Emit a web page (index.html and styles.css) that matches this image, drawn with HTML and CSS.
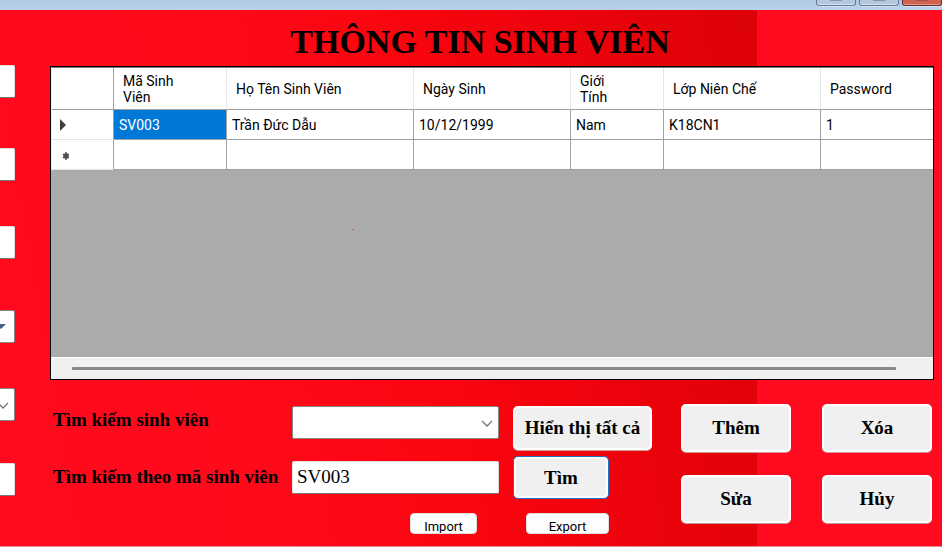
FILE: index.html
```html
<!DOCTYPE html>
<html lang="vi">
<head>
<meta charset="utf-8">
<title>Thông tin sinh viên</title>
<link rel="stylesheet" href="styles.css">
</head>
<body>
<div class="window">
  <header class="titlebar">
    <button class="caption" type="button" aria-label="Thu nhỏ"><span class="caption-mark"></span></button>
    <button class="caption" type="button" aria-label="Phóng to"><span class="caption-mark"></span></button>
    <button class="caption caption-close" type="button" aria-label="Đóng"><span class="caption-mark"></span></button>
  </header>
  <div class="form">
    <aside class="details">
      <input class="field" type="text" aria-label="Mã sinh viên">
      <input class="field" type="text" aria-label="Họ tên sinh viên">
      <input class="field" type="text" aria-label="Password">
      <div class="combo">
        <input class="field" type="text" aria-label="Ngày sinh">
        <svg class="drop-arrow" viewBox="0 0 10 5" aria-hidden="true"><path d="M0 0h10L5 5z" fill="#465f8c"/></svg>
      </div>
      <div class="combo">
        <select class="field" aria-label="Giới tính"><option></option></select>
        <svg class="chevron" viewBox="0 0 12 7" aria-hidden="true"><path d="M1 1l5 5 5-5" fill="none" stroke="#777" stroke-width="1.3"/></svg>
      </div>
      <input class="field" type="text" aria-label="Lớp niên chế">
    </aside>
    <main class="main">
      <h1 class="title">THÔNG TIN SINH VIÊN</h1>
      <section class="grid-view">
        <table class="students">
          <colgroup>
            <col class="c-mark"><col class="c-id"><col class="c-name"><col class="c-date"><col class="c-sex"><col class="c-date"><col>
          </colgroup>
          <thead>
            <tr>
              <th></th>
              <th>Mã Sinh<br>Viên</th>
              <th>Họ Tên Sinh Viên</th>
              <th>Ngày Sinh</th>
              <th>Giới<br>Tính</th>
              <th>Lớp Niên Chế</th>
              <th>Password</th>
            </tr>
          </thead>
          <tbody>
            <tr>
              <td class="mark"><svg class="row-mark" viewBox="0 0 12 12" aria-hidden="true"><path d="M3 0l6 6-6 6z" fill="#404040"/></svg></td>
              <td class="selected">SV003</td>
              <td>Trần Đức Dẫu</td>
              <td>10/12/1999</td>
              <td>Nam</td>
              <td>K18CN1</td>
              <td>1</td>
            </tr>
            <tr>
              <td class="mark"><svg class="row-mark" viewBox="0 0 12 12" aria-hidden="true"><path d="M9 3v8M6 5l6 4M12 5l-6 4" fill="none" stroke="#555" stroke-width="1.500"/><circle cx="9" cy="7" r="2.800" fill="#505050"/></svg></td>
              <td></td><td></td><td></td><td></td><td></td><td></td>
            </tr>
          </tbody>
        </table>
        <span class="speck"></span>
        <div class="scrollbar"><div class="thumb"></div></div>
      </section>
      <section class="tools">
        <div class="search">
          <label class="label" for="find-student">Tìm kiếm sinh viên</label>
          <div class="combo">
            <select class="field" id="find-student"><option></option></select>
            <svg class="chevron" viewBox="0 0 12 7" aria-hidden="true"><path d="M1 1l5 5 5-5" fill="none" stroke="#777" stroke-width="1.3"/></svg>
          </div>
          <button class="btn btn-all" type="button">Hiển thị tất cả</button>

          <label class="label centered" for="find-id">Tìm kiếm theo mã sinh viên</label>
          <input class="field centered" id="find-id" type="text" value="SV003">
          <button class="btn btn-find" type="button">Tìm</button>

          <button class="btn-small btn-import" type="button"><span class="small-text">Import</span></button>
          <button class="btn-small btn-export" type="button"><span class="small-text">Export</span></button>
        </div>
        <div class="actions">
          <button class="btn" type="button">Thêm</button>
          <button class="btn" type="button">Xóa</button>
          <button class="btn" type="button">Sửa</button>
          <button class="btn" type="button">Hủy</button>
        </div>
      </section>
    </main>
  </div>
</div>
</body>
</html>
```
FILE: styles.css
```css
* {
  box-sizing: border-box;
}

body {
  margin: 0;
  font-family: "Liberation Serif", serif;
  color: #000;
}

.window {
  display: flex;
  flex-direction: column;
  min-height: 100vh;
  border-bottom: 1px solid #e08a98;
}

/* Title bar */
.titlebar {
  display: flex;
  justify-content: flex-end;
  gap: 3px;
  height: 10px;
  background: linear-gradient(#b0c9e3, #b9d1ea);
}

.caption {
  display: flex;
  justify-content: center;
  width: 40px;
  height: 6px;
  padding: 0;
  border: 1px solid #66788f;
  border-top: 0;
  border-radius: 0 0 3px 3px;
  background: #b3c8de;
  box-shadow: inset 0 -1px #d5e3f1, 0 1px #d5e3f1;
}

.caption-mark {
  width: 12px;
  height: 1px;
  background: #8296b0;
}

.caption-close {
  border-color: #662b35;
  background: #cf6350;
  box-shadow: inset 0 -1px #e69a8c, 0 1px #d5e3f1;
}

.caption-close .caption-mark {
  background: #a05050;
}

/* Form surface */
.form {
  display: flex;
  flex: 1;
  background:
    linear-gradient(90deg, transparent 80.4%, #ff0a1e 80.4%),
    linear-gradient(80deg, #ff0a1e 0%, #ff0a1b 24%, #fb0510 45%, #e8020a 68%, #db0208 84%);
}

.details {
  display: grid;
  grid-template-rows: 83px 78px 84px 78px 75px 33px;
  align-content: start;
  justify-content: end;
  width: 15px;
  padding-top: 55px;
  overflow: hidden;
}

.details .field {
  width: 207px;
}

.main {
  display: flex;
  flex: 1;
  flex-direction: column;
  min-width: 0;
  padding: 12px 8px 0 35px;
}

.title {
  height: 44px;
  margin: 0;
  padding-right: 24px;
  font-size: 34px;
  line-height: 40px;
  text-align: center;
  white-space: nowrap;
}

/* Data grid */
.grid-view {
  position: relative;
  display: flex;
  flex: 1;
  flex-direction: column;
  border: 1px solid #000;
  background: #ababab;
}

.students {
  width: 100%;
  border-top: 1px solid #777;
  border-left: 1px solid #eee;
  border-spacing: 0;
  table-layout: fixed;
  background: #fff;
  font-family: Roboto, "Liberation Sans", sans-serif;
  font-size: 14px;
  line-height: 16px;
}

.c-mark { width: 62px; }
.c-id { width: 113px; }
.c-name { width: 187px; }
.c-date { width: 157px; }
.c-sex { width: 93px; }

.students th {
  height: 42px;
  padding: 0 0 0 9px;
  border-right: 1px solid #e5e5e5;
  border-bottom: 1px solid #a0a0a0;
  font-weight: 400;
  text-align: left;
  white-space: nowrap;
}

.students td {
  height: 30px;
  padding: 0 0 0 5px;
  border-right: 1px solid #a0a0a0;
  border-bottom: 1px solid #a0a0a0;
  white-space: nowrap;
}

.students th:last-child,
.students td:last-child {
  border-right: 0;
}

.students th:first-child {
  border-right-color: #a0a0a0;
}

.students .mark {
  border-bottom-color: #e5e5e5;
}

.students .selected {
  background: #0078d7;
  color: #fff;
}

.row-mark {
  display: block;
  width: 12px;
  height: 12px;
}

.speck {
  position: absolute;
  top: 162px;
  left: 301px;
  width: 2px;
  height: 1px;
  background: #d85858;
}

.scrollbar {
  height: 22px;
  margin-top: auto;
  padding: 9px 37px 0 21px;
  border-top: 1px solid #fff;
  background: #f0f0f0;
}

.thumb {
  height: 3px;
  border-radius: 1px;
  background: #888;
}

/* Search and action buttons */
.tools {
  display: flex;
  justify-content: space-between;
  gap: 29px;
  padding: 24px 2px 20px 3px;
}

.search {
  display: grid;
  flex: 1;
  grid-template-columns: 1fr 207px 139px;
  grid-template-rows: 44px 42px 22px;
  column-gap: 14px;
  row-gap: 6px;
  align-items: start;
  padding-top: 2px;
}

.label {
  margin-right: -14px;
  font-size: 19px;
  font-weight: 700;
  line-height: 28px;
  white-space: nowrap;
}

.centered {
  align-self: center;
}

.field {
  display: block;
  width: 100%;
  height: 33px;
  margin: 0;
  padding: 0 4px;
  border: 1px solid #ddd;
  border-bottom-color: #777;
  border-radius: 2px;
  outline: 0;
  background: #fff;
  color: #000;
  font-family: inherit;
  font-size: 19px;
  appearance: none;
}

.combo {
  position: relative;
}

.combo .field {
  border-color: #888;
}

.chevron,
.drop-arrow {
  position: absolute;
  top: 14px;
  right: 6px;
  width: 12px;
  height: 7px;
}

.drop-arrow {
  right: 9px;
  width: 10px;
  height: 5px;
}

.btn {
  padding: 0;
  border: 2px solid #fff;
  border-radius: 5px;
  background: #f0f0f0;
  box-shadow: 0 1px #c99;
  color: #000;
  font-family: inherit;
  font-size: 19px;
  font-weight: 700;
  white-space: nowrap;
}

.btn-all {
  height: 44px;
}

.btn-find {
  width: 96px;
  height: 43px;
  border: 1px solid #1a73c9;
  box-shadow: inset 0 0 0 2px #fff;
}

.btn-small {
  height: 21px;
  margin-top: 9px;
  padding: 0;
  border: 1px solid #ddd;
  border-radius: 4px;
  background: #fdfdfd;
  color: #000;
  font-family: Roboto, "Liberation Sans", sans-serif;
  font-size: 13px;
}

.small-text {
  display: block;
  height: 16px;
  margin-top: 2px;
  line-height: 19px;
  overflow: hidden;
}

.btn-import {
  grid-column: 2;
  justify-self: end;
  width: 67px;
  margin-right: 22px;
}

.btn-export {
  grid-column: 3;
  width: 83px;
  margin-left: 13px;
}

.actions {
  display: grid;
  grid-template-columns: 110px 110px;
  grid-auto-rows: 48px;
  gap: 23px 31px;
}
```
